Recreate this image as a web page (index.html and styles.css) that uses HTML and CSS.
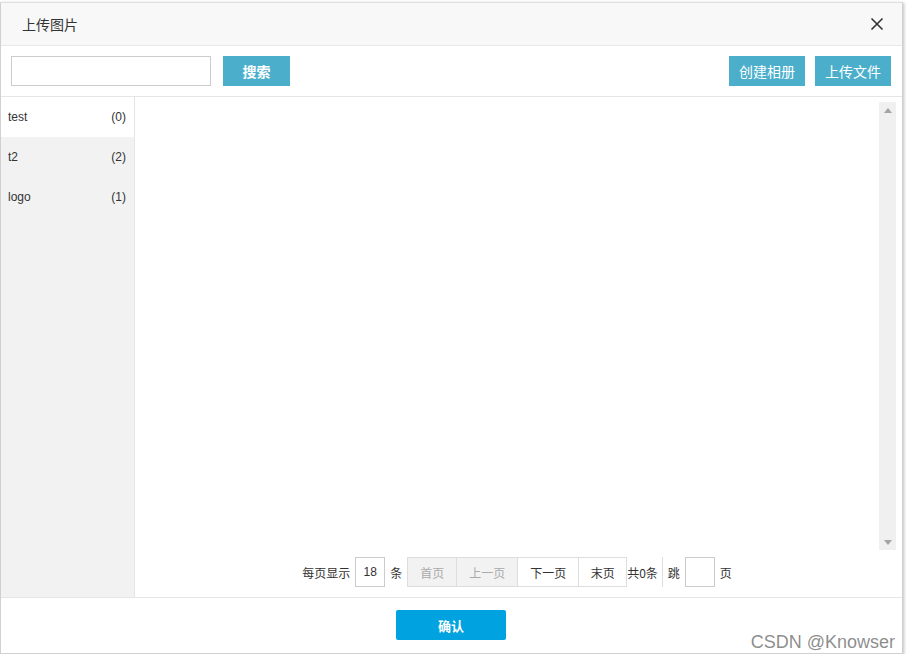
FILE: index.html
```html
<!DOCTYPE html>
<html lang="zh">
<head>
<meta charset="utf-8">
<title>上传图片</title>
<link rel="stylesheet" href="styles.css">
</head>
<body>
<div class="dialog">
  <div class="dlg-header">
    <span class="dlg-title">上传图片</span>
    <svg class="close" width="14" height="14" viewBox="0 0 14 14"><path d="M1.5 1.5 L12.5 12.5 M12.5 1.5 L1.5 12.5" stroke="#333" stroke-width="1.6" fill="none"/></svg>
  </div>
  <div class="toolbar">
    <input class="search-input" type="text">
    <button class="btn btn-search">搜索</button>
    <div class="spacer"></div>
    <button class="btn btn-tool">创建相册</button>
    <button class="btn btn-tool">上传文件</button>
  </div>
  <div class="content">
    <ul class="albums">
      <li class="album active"><span>test</span><span>(0)</span></li>
      <li class="album"><span>t2</span><span>(2)</span></li>
      <li class="album"><span>logo</span><span>(1)</span></li>
    </ul>
    <div class="main">
      <div class="grid-area">
        <div class="images"></div>
        <div class="scrollbar">
          <svg width="8" height="5" viewBox="0 0 8 5"><path d="M0 5 L4 0 L8 5 Z" fill="#a3a3a3"/></svg>
          <svg width="8" height="5" viewBox="0 0 8 5"><path d="M0 0 L4 5 L8 0 Z" fill="#a3a3a3"/></svg>
        </div>
      </div>
      <div class="pager">
        <span class="lbl">每页显示</span>
        <input class="pg-input" type="text" value="18">
        <span class="lbl">条</span>
        <div class="pg-group">
          <span class="pg-btn disabled w49">首页</span>
          <span class="pg-btn disabled">上一页</span>
          <span class="pg-btn">下一页</span>
          <span class="pg-btn w49">末页</span>
        </div>
        <span class="total">共0条</span>
        <span class="sep"></span>
        <span class="lbl">跳</span>
        <input class="pg-input" type="text">
        <span class="lbl">页</span>
      </div>
    </div>
  </div>
  <div class="dlg-footer">
    <button class="btn-ok">确认</button>
  </div>
  <span class="watermark">CSDN @Knowser</span>
</div>
</body>
</html>
```
FILE: styles.css
```css
* { box-sizing: border-box; }
html, body { margin: 0; padding: 0; background: #fff; }
body {
  padding: 2px 0 0 0;
  font-family: "Liberation Sans", "Noto Sans CJK SC", sans-serif;
  font-size: 12px;
  color: #333;
}
.dialog {
  position: relative;
  width: 903px;
  height: 652px;
  background: #fff;
  border: 1px solid #d0d0d0;
  border-top-color: #e0e0e0;
  box-shadow: 1px 1px 3px rgba(0,0,0,0.25);
  display: flex;
  flex-direction: column;
}
.dlg-header {
  height: 43px;
  flex: none;
  background: #f8f8f8;
  border-bottom: 1px solid #e8e8e8;
  display: flex;
  align-items: center;
  padding: 0 18px 0 21px;
}
.dlg-title { font-size: 14px; color: #333; flex: 1; font-family: "Noto Sans CJK SC", sans-serif; }
.close { display: block; }
.toolbar {
  height: 51px;
  flex: none;
  display: flex;
  align-items: center;
  padding: 0 11px 0 10px;
  border-bottom: 1px solid #e5e5e5;
}
.search-input {
  width: 200px;
  height: 30px;
  border: 1px solid #ccc;
  margin: 0;
  outline: none;
}
.btn {
  border: 0;
  height: 30px;
  background: #4bafcc;
  color: #fff;
  font-family: "Noto Sans CJK SC", sans-serif;
  font-size: 14px;
  font-weight: bold;
  padding: 0;
  margin: 0;
}
.btn-search { width: 67px; margin-left: 12px; }
.spacer { flex: 1; }
.btn-tool { width: 76px; margin-left: 10px; font-weight: normal; }
.content { flex: 1; display: flex; min-height: 0; }
.albums {
  list-style: none;
  margin: 0;
  padding: 0;
  width: 134px;
  flex: none;
  background: #f2f2f2;
  border-right: 1px solid #e5e5e5;
}
.album {
  height: 40px;
  display: flex;
  justify-content: space-between;
  align-items: center;
  padding: 0 8px 0 7px;
  color: #333;
}
.album.active { background: #fff; }
.main { flex: 1; display: flex; flex-direction: column; padding: 5px 6px 0 5px; }
.grid-area { height: 448px; display: flex; }
.images { flex: 1; }
.scrollbar {
  width: 17px;
  background: #f0f0f0;
  display: flex;
  flex-direction: column;
  justify-content: space-between;
  align-items: center;
  padding: 6px 0 5px;
}
.scrollbar svg { display: block; }
.pager {
  display: flex;
  align-items: center;
  justify-content: center;
  margin-top: 7px;
  height: 30px;
  padding-right: 2px;
  font-family: "Noto Sans CJK SC", sans-serif;
  color: #333;
}
.lbl { margin: 0 5px; }
.pg-input {
  width: 30px;
  height: 30px;
  border: 1px solid #ccc;
  margin: 0;
  padding: 0;
  text-align: center;
  font-family: "Liberation Sans", sans-serif;
  font-size: 12px;
  color: #333;
  outline: none;
}
.pg-group { display: flex; margin-left: 0; border: 1px solid #ddd; height: 30px; }
.pg-btn {
  width: 61px;
  display: flex;
  align-items: center;
  justify-content: center;
  border-left: 1px solid #ddd;
  color: #333;
  background: #fff;
}
.pg-btn:first-child { border-left: 0; }
.pg-btn.w49 { width: 48px; }
.pg-btn.disabled { background: #f2f2f2; color: #aaa; }
.total { margin-left: 0; }
.sep { width: 1px; height: 30px; background: #ddd; margin: 0 0 0 4px; }
.dlg-footer {
  height: 56px;
  flex: none;
  border-top: 1px solid #e5e5e5;
  display: flex;
  justify-content: center;
  align-items: flex-start;
  padding-top: 12px;
}
.btn-ok {
  width: 110px;
  height: 30px;
  border: 0;
  border-radius: 2px;
  background: #00a2e0;
  color: #fff;
  font-family: "Noto Sans CJK SC", sans-serif;
  font-weight: bold;
  font-size: 13px;
  padding: 0;
  margin-right: 1px;
}
.watermark {
  position: absolute;
  right: 7px;
  bottom: 0;
  font-family: "Liberation Sans", sans-serif;
  font-size: 18px;
  color: rgba(120,120,120,0.85);
}
```
